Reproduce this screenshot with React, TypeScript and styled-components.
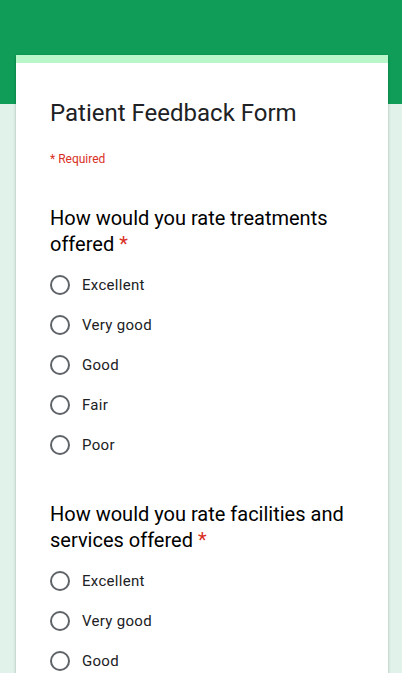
import React from "react";
import styled, { createGlobalStyle } from "styled-components";

const Global = createGlobalStyle`
  html, body { margin: 0; padding: 0; }
  body {
    background: #e0f2e9;
    font-family: Roboto, "Noto Sans", sans-serif;
    -webkit-font-smoothing: antialiased;
  }
`;

const Page = styled.div`
  min-height: 673px;
  height: 673px;
  background: linear-gradient(#0f9d58 0, #0f9d58 104px, #e0f2e9 104px);
  padding: 55px 14px 0 16px;
  box-sizing: border-box;
  overflow: hidden;
`;

const Card = styled.div`
  width: 372px;
  background: #fff;
  border-top: 8px solid #b9f6ca;
  box-shadow: 0 1px 3px rgba(0, 0, 0, 0.22), 0 1px 1px rgba(0, 0, 0, 0.1);
  padding: 34px 24px 40px 34px;
  box-sizing: border-box;
`;

const Title = styled.h1`
  margin: 0;
  font-size: 24px;
  line-height: 32px;
  font-weight: 400;
  color: #202124;
`;

const Required = styled.div`
  margin-top: 22px;
  font-size: 12px;
  line-height: 16px;
  color: #d93025;
`;

const Question = styled.div<{ $first?: boolean }>`
  margin-top: ${(p) => (p.$first ? "38px" : "36px")};
`;

const QTitle = styled.div`
  font-size: 20px;
  line-height: 26px;
  color: #000;
  font-weight: 400;
`;

const Star = styled.span`
  color: #d93025;
`;

const Options = styled.div`
  margin-top: 8px;
  display: flex;
  flex-direction: column;
`;

const Option = styled.label`
  height: 40px;
  display: flex;
  align-items: center;
  gap: 12px;
`;

const Radio = styled.span`
  width: 20px;
  height: 20px;
  border: 2px solid #5f6368;
  border-radius: 50%;
  box-sizing: border-box;
  flex: none;
`;

const OptionText = styled.span`
  font-size: 15px;
  color: #202124;
  letter-spacing: 0.3px;
`;

const choices = ["Excellent", "Very good", "Good", "Fair", "Poor"];
const questions = [
  "How would you rate treatments offered",
  "How would you rate facilities and services offered",
];

export default function App() {
  return (
    <>
      <Global />
      <Page>
        <Card>
          <Title>Patient Feedback Form</Title>
          <Required>* Required</Required>
          {questions.map((q, i) => (
            <Question key={q} $first={i === 0}>
              <QTitle>
                {q} <Star>*</Star>
              </QTitle>
              <Options>
                {choices.map((c) => (
                  <Option key={c}>
                    <Radio />
                    <OptionText>{c}</OptionText>
                  </Option>
                ))}
              </Options>
            </Question>
          ))}
        </Card>
      </Page>
    </>
  );
}
